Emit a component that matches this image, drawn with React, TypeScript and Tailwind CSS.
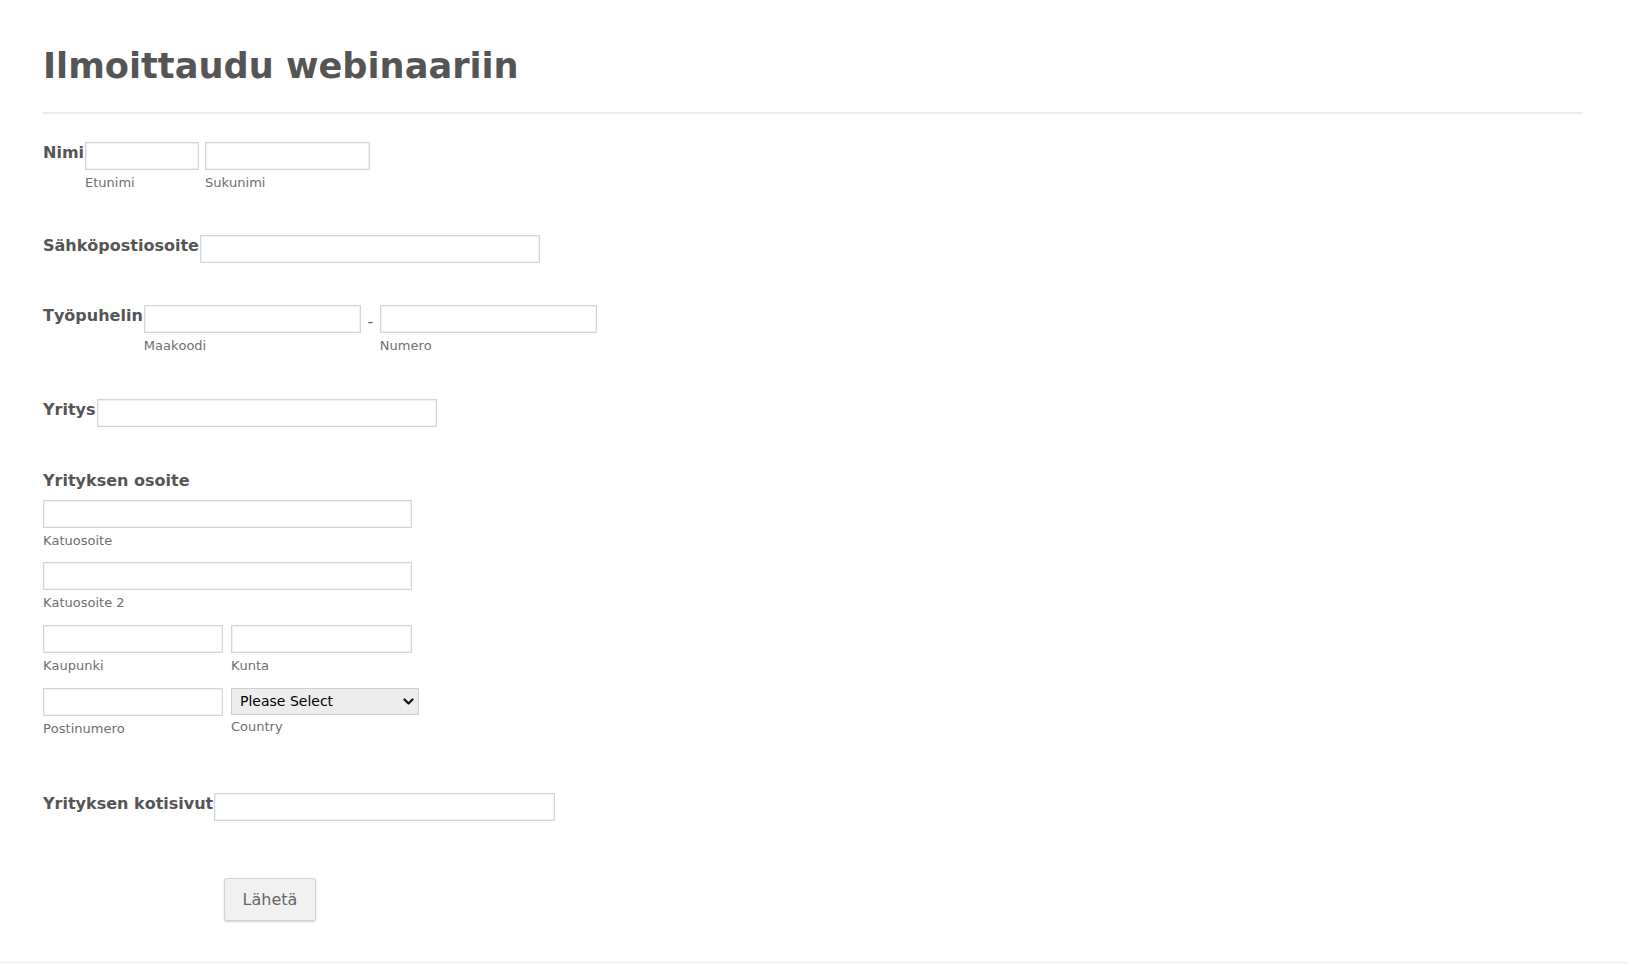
import React from "react";

const inputCls =
  "block h-[28px] border border-[#d6d6d6] bg-white shadow-[inset_0_0_0_1px_#f1f1f1] outline-none";

function SubLabel({ children }: { children: React.ReactNode }) {
  return <div className="mt-[5px] text-[13px] leading-4 text-[#6f6f6f]">{children}</div>;
}

function Label({ children }: { children: React.ReactNode }) {
  return (
    <label className="shrink-0 pt-[1px] text-[16px] font-bold leading-5 text-[#555]">{children}</label>
  );
}

export default function App() {
  return (
    <div className="min-h-screen bg-white font-['DejaVu_Sans',Verdana,sans-serif] text-[#555] [font-kerning:none]">
      <div className="pl-[43px] pr-[45px] pt-[44px]">
        <h1 className="text-[35.2px] font-bold leading-[44px] text-[#555]">Ilmoittaudu webinaariin</h1>
        <div className="mt-[24px] h-[2px] bg-[#ececec]" />

        {/* Nimi */}
        <div className="mt-[28px] flex items-start">
          <Label>Nimi</Label>
          <div className="ml-[1px] flex gap-[6px]">
            <div>
              <input className={`${inputCls} w-[114px]`} />
              <SubLabel>Etunimi</SubLabel>
            </div>
            <div>
              <input className={`${inputCls} w-[165px]`} />
              <SubLabel>Sukunimi</SubLabel>
            </div>
          </div>
        </div>

        {/* Sähköposti */}
        <div className="mt-[44px] flex items-start">
          <Label>Sähköpostiosoite</Label>
          <input className={`${inputCls} ml-[1px] w-[340px]`} />
        </div>

        {/* Työpuhelin */}
        <div className="mt-[42px] flex items-start">
          <Label>Työpuhelin</Label>
          <div className="ml-[1px] flex">
            <div>
              <input className={`${inputCls} w-[217px]`} />
              <SubLabel>Maakoodi</SubLabel>
            </div>
            <div className="w-[19px] pt-[7px] text-center text-[16px] leading-5 text-[#666]">-</div>
            <div>
              <input className={`${inputCls} w-[217px]`} />
              <SubLabel>Numero</SubLabel>
            </div>
          </div>
        </div>

        {/* Yritys */}
        <div className="mt-[45px] flex items-start">
          <Label>Yritys</Label>
          <input className={`${inputCls} ml-[1px] w-[340px]`} />
        </div>

        {/* Yrityksen osoite */}
        <div className="mt-[44px]">
          <div className="text-[16px] font-bold leading-5 text-[#555]">Yrityksen osoite</div>
          <div className="mt-[9px] w-[369px]">
            <input className={`${inputCls} w-[369px]`} />
            <SubLabel>Katuosoite</SubLabel>
            <input className={`${inputCls} mt-[13px] w-[369px]`} />
            <SubLabel>Katuosoite 2</SubLabel>
            <div className="mt-[14px] flex gap-[8px]">
              <div>
                <input className={`${inputCls} w-[180px]`} />
                <SubLabel>Kaupunki</SubLabel>
              </div>
              <div>
                <input className={`${inputCls} w-[181px]`} />
                <SubLabel>Kunta</SubLabel>
              </div>
            </div>
            <div className="mt-[14px] flex gap-[8px]">
              <div>
                <input className={`${inputCls} w-[180px]`} />
                <SubLabel>Postinumero</SubLabel>
              </div>
              <div>
                <div className="relative h-[27px] w-[188px]">
                  <select className="h-[27px] w-[188px] appearance-none border border-[#cfcfcf] bg-[#ededed] pl-[8px] text-[14px] text-black outline-none">
                    <option>Please Select</option>
                  </select>
                  <svg
                    className="pointer-events-none absolute right-[5px] top-[10px]"
                    width="11"
                    height="8"
                    viewBox="0 0 11 8"
                    fill="none"
                    stroke="#111"
                    strokeWidth="2.2"
                    strokeLinecap="round"
                    strokeLinejoin="round"
                  >
                    <polyline points="1.5,1.5 5.5,5.5 9.5,1.5" />
                  </svg>
                </div>
                <div className="mt-[4px] text-[13px] leading-4 text-[#6f6f6f]">Country</div>
              </div>
            </div>
          </div>
        </div>

        {/* Kotisivut */}
        <div className="mt-[56px] flex items-start">
          <Label>Yrityksen kotisivut</Label>
          <input className={`${inputCls} ml-[1px] w-[341px]`} />
        </div>

        <button className="ml-[181px] mt-[57px] h-[43px] w-[92px] rounded-[3px] border border-[#d2d2d2] bg-[#f1f1f1] text-[16px] text-[#666] shadow-[0_1px_2px_rgba(0,0,0,0.18)]">
          Lähetä
        </button>
      </div>
      <div className="mt-[41px] h-[4px] border-t border-[#ededed] bg-[#fafafa]" />
    </div>
  );
}
